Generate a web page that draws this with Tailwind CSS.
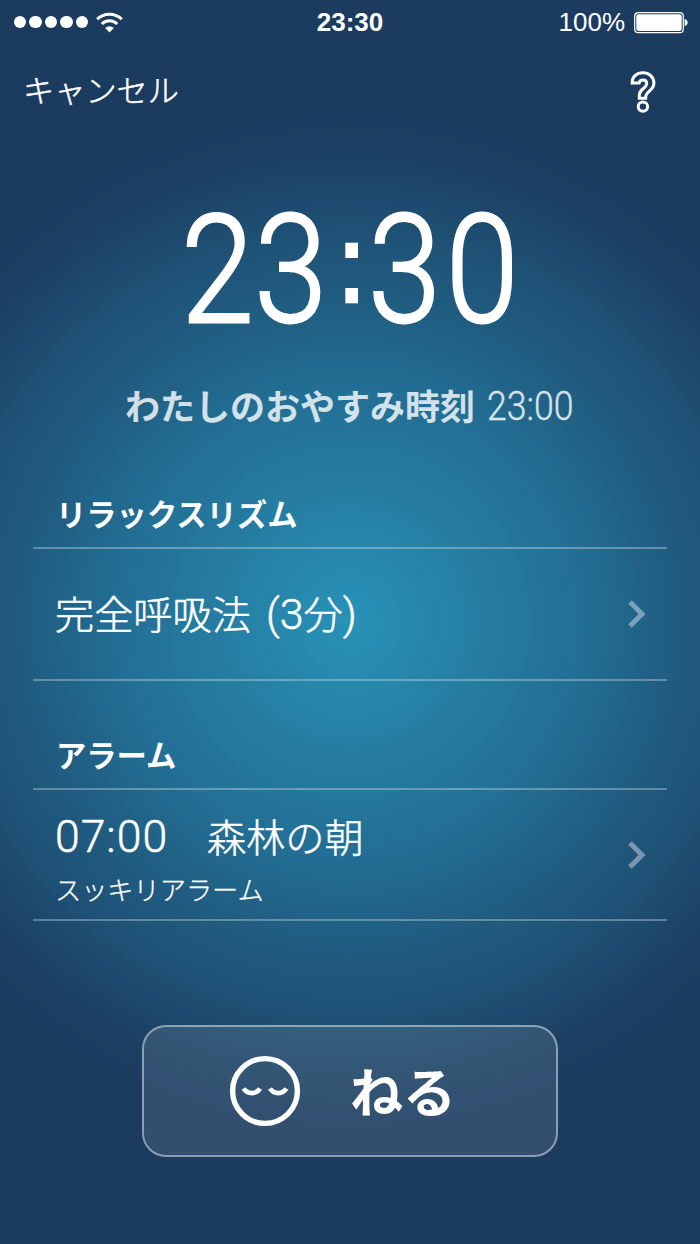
<!DOCTYPE html>
<html lang="ja">

<head>
    <meta charset="UTF-8">
    <meta name="viewport" content="width=device-width, initial-scale=1.0">
    <title>おやすみ</title>
    <script src="https://cdn.jsdelivr.net/npm/@tailwindcss/browser@4"></script>
</head>

<body class="bg-[#1b3b5f]">
    <div class="w-[700px] h-[1244px] overflow-hidden flex flex-col text-white font-['Noto_Sans_CJK_JP',sans-serif] bg-[radial-gradient(circle_at_350px_622px,#2892b7_0px,#267da2_130px,#236f95_230px,#205e82_315px,#1f5277_385px,#1c4265_460px,#1b3b5f_515px)]">
        <!-- Status bar -->
        <div class="h-11 grid grid-cols-3 items-center pl-3.5 pr-3 font-['Liberation_Sans',sans-serif]">
            <div class="flex items-center gap-[3px]">
                <span class="size-[12.4px] rounded-full bg-white"></span>
                <span class="size-[12.4px] rounded-full bg-white"></span>
                <span class="size-[12.4px] rounded-full bg-white"></span>
                <span class="size-[12.4px] rounded-full bg-white"></span>
                <span class="size-[12.4px] rounded-full bg-white"></span>
                <svg class="ml-[5px] w-[27px] h-[21px]" viewBox="0 0 27 21" fill="none" stroke="white" stroke-width="3">
                    <path d="M1.2 7.3a17.4 17.4 0 0 1 24.6 0" />
                    <path d="M5.8 12a10.9 10.9 0 0 1 15.4 0" />
                    <path d="M13.5 20.4 9.2 16.1a6.1 6.1 0 0 1 8.6 0z" fill="white" stroke="none" />
                </svg>
            </div>
            <div class="pr-0.5 text-center text-[26px] leading-none font-bold">23:30</div>
            <div class="flex items-center justify-end gap-[9px]">
                <span class="text-[26px] leading-none">100%</span>
                <svg class="mt-px w-[54px] h-[22px]" viewBox="0 0 54 22">
                    <rect x="0.7" y="0.7" width="48.6" height="20" rx="3.5" fill="none" stroke="white" stroke-width="1.2" />
                    <rect x="2.3" y="2.3" width="45.4" height="16.8" rx="2" fill="white" />
                    <path d="M50.6 7c4 .8 4 6.4 0 7.2z" fill="white" />
                </svg>
            </div>
        </div>

        <!-- Navigation -->
        <div class="h-[96px] flex items-center justify-between pl-[23px] pr-11">
            <a href="#" class="pb-[7px] text-[31.2px] leading-none font-light [-webkit-text-stroke:0.5px]">キャンセル</a>
            <a href="#">
                <svg class="w-[26px] h-[44px]" viewBox="0 0 26 44" fill="none" stroke="white" stroke-width="3">
                    <path d="M2.1 12.9C2.1 6.6 6.8 2.8 12.9 2.8s11 4.2 11 10.4c0 7.4-8.2 8-8.2 13.6v1.5H9.3v-3.2c0-6.4 7.4-6.6 7.4-11.6 0-2.2-1.5-3.6-3.7-3.6-2.3 0-3.6 1.3-3.9 3z" />
                    <circle cx="12.9" cy="36.6" r="4.7" />
                </svg>
            </a>
        </div>

        <!-- Clock -->
        <div class="h-[220px] pt-[55px] flex justify-center font-['Roboto',sans-serif]">
            <div class="flex items-center h-[152px] text-[150px] leading-none font-light scale-x-[0.87] [-webkit-text-stroke:2.8px_white]">
                <span class="w-[177px] tracking-[1px]">23</span>
                <span class="w-[38px] -mt-3.5 text-center font-normal font-['Liberation_Sans',sans-serif] text-[105px] [-webkit-text-stroke:4.5px_white]">:</span>
                <span class="w-[173px] tracking-[6px]">30</span>
            </div>
        </div>

        <div class="h-[92px] pb-1 flex items-center justify-center text-white/80">
            <span class="text-[35px] leading-none font-bold">わたしのおやすみ時刻</span>
            <span class="w-[88px] ml-3 pt-1.5 flex"><span class="origin-left scale-x-[0.89] text-[40px] leading-none font-light font-['Roboto',sans-serif] [-webkit-text-stroke:0.3px]">23:00</span></span>
        </div>

        <!-- Relax rhythm -->
        <section class="px-[33px]">
            <h2 class="h-[97px] pt-[46px] pl-[23px] text-[30.3px] leading-[30px] font-bold border-b-2 border-white/30">リラックスリズム</h2>
            <a href="#" class="h-[132px] pl-[22px] pr-[21px] flex items-center justify-between border-b-2 border-white/30">
                <span class="flex items-baseline text-[39.2px] leading-none font-light [-webkit-text-stroke:0.5px]">完全呼吸法<span class="ml-[15px] text-[43px] font-['Roboto',sans-serif]">(3</span>分<span class="text-[43px] font-['Roboto',sans-serif]">)</span></span>
                <svg class="w-[18px] h-[28px]" viewBox="0 0 18 28" fill="none" stroke="white" stroke-opacity="0.4" stroke-width="5">
                    <path d="M2 2 14 14 2 26" />
                </svg>
            </a>
        </section>

        <!-- Alarm -->
        <section class="px-[33px]">
            <h2 class="h-[109px] pt-[58px] pl-[23px] text-[30.3px] leading-[30px] font-bold border-b-2 border-white/30">アラーム</h2>
            <a href="#" class="h-[131px] pl-[22px] pr-[21px] flex items-center justify-between border-b-2 border-white/30">
                <span class="pt-[9px] flex flex-col gap-[19px]">
                    <span class="flex items-baseline text-[39.2px] leading-none font-light [-webkit-text-stroke:0.5px]"><span class="w-[152px] text-[44.5px] leading-[39px] tracking-[1px] font-['Roboto',sans-serif]">07:00</span>森林の朝</span>
                    <span class="text-[26.2px] leading-none font-light [-webkit-text-stroke:0.3px]">スッキリアラーム</span>
                </span>
                <svg class="w-[18px] h-[28px]" viewBox="0 0 18 28" fill="none" stroke="white" stroke-opacity="0.4" stroke-width="5">
                    <path d="M2 2 14 14 2 26" />
                </svg>
            </a>
        </section>

        <!-- Sleep button -->
        <button class="mt-[104px] mx-auto w-[416px] h-[132px] flex items-center pl-[85px] rounded-[24px] border-2 border-white/50 bg-white/10 bg-clip-padding">
            <svg class="size-[72px]" viewBox="0 0 72 72" fill="none" stroke="white">
                <circle cx="36" cy="36" r="32.4" stroke-width="5.4" />
                <path d="M14.6 33.6c3.8 6 12.6 6 16.4 0M41 33.6c3.8 6 12.6 6 16.4 0" stroke-width="4.6" />
            </svg>
            <span class="ml-[49px] pb-0.5 text-[53px] leading-none font-bold">ねる</span>
        </button>
    </div>
</body>

</html>
